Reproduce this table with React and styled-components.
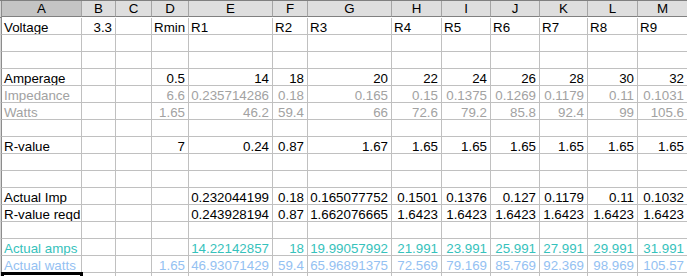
import styled, { createGlobalStyle } from 'styled-components'

const GlobalStyle = createGlobalStyle`
    html, body {
        margin: 0;
        padding: 0;
        background: #fff;
    }
    body {
        font-family: "Liberation Sans", Arial, sans-serif;
    }
`;

const COLS = [80, 34, 36, 37, 84, 35, 84, 50, 49, 49, 48, 50, 50];
const LETTERS = ['A', 'B', 'C', 'D', 'E', 'F', 'G', 'H', 'I', 'J', 'K', 'L', 'M'];

const Frame = styled.div`
    width: 687px;
    height: 276px;
    overflow: hidden;
    border-top: 1px solid #7f7f7f;
    box-sizing: border-box;
`;

const Sheet = styled.div`
    display: grid;
    grid-template-columns: 2px ${COLS.map(w => `${w}px`).join(' ')};
    grid-auto-rows: 17px;
    width: max-content;
    font-size: 13.33px;
`;

const Corner = styled.div`
    background: #d6d6d6;
    border-right: 1px solid #8c8c8c;
    border-bottom: 1px solid ${p => p.$head ? '#808080' : '#c8c8c8'};
    box-sizing: border-box;
`;

const HeaderCell = styled.div`
    background: ${p => p.$active ? '#c4c4c4' : '#dedede'};
    border-right: 1px solid #a4a4a4;
    border-bottom: 1px solid #808080;
    box-sizing: border-box;
    height: 16px;
    color: #000;
    text-align: center;
    line-height: 16px;
`;

const TONES = {
    normal: '#000',
    muted: '#a2a2a2',
    teal: '#36c2bc',
    sky: '#94c1f2',
};

const Cell = styled.div`
    border-right: 1px solid #c0c0c0;
    border-bottom: 1px solid #c0c0c0;
    box-sizing: border-box;
    padding: 2px 3px 0 2px;
    line-height: 15px;
    white-space: nowrap;
    overflow: hidden;
    text-align: ${p => p.$num ? 'right' : 'left'};
    color: ${p => TONES[p.$tone || 'normal']};
    ${p => p.$selected && `
        outline: 3px solid #000;
        outline-offset: -2px;
        position: relative;
        z-index: 1;
    `}
`;

const blank = [];

const rows = [
    { tone: 'normal', cells: ['Voltage', 3.3, '', 'Rmin', 'R1', 'R2', 'R3', 'R4', 'R5', 'R6', 'R7', 'R8', 'R9'] },
    { cells: blank },
    { cells: blank },
    { tone: 'normal', cells: ['Amperage', '', '', 0.5, 14, 18, 20, 22, 24, 26, 28, 30, 32] },
    { tone: 'muted', cells: ['Impedance', '', '', 6.6, 0.235714286, 0.18, 0.165, 0.15, 0.1375, 0.1269, 0.1179, 0.11, 0.1031] },
    { tone: 'muted', cells: ['Watts', '', '', 1.65, 46.2, 59.4, 66, 72.6, 79.2, 85.8, 92.4, 99, 105.6] },
    { cells: blank },
    { tone: 'normal', cells: ['R-value', '', '', 7, 0.24, 0.87, 1.67, 1.65, 1.65, 1.65, 1.65, 1.65, 1.65] },
    { cells: blank },
    { cells: blank },
    { tone: 'normal', cells: ['Actual Imp', '', '', '', 0.232044199, 0.18, 0.165077752, 0.1501, 0.1376, 0.127, 0.1179, 0.11, 0.1032] },
    { tone: 'normal', cells: ['R-value reqd', '', '', '', 0.243928194, 0.87, 1.662076665, 1.6423, 1.6423, 1.6423, 1.6423, 1.6423, 1.6423] },
    { cells: blank },
    { tone: 'teal', cells: ['Actual amps', '', '', '', 14.22142857, 18, 19.99057992, 21.991, 23.991, 25.991, 27.991, 29.991, 31.991] },
    { tone: 'sky', cells: ['Actual watts', '', '', 1.65, 46.93071429, 59.4, 65.96891375, 72.569, 79.169, 85.769, 92.369, 98.969, 105.57] },
    { cells: blank, selected: true },
];

export default function App() {
    return (
        <Frame>
            <GlobalStyle />
            <Sheet>
                <Corner $head />
                {LETTERS.map((l, i) => (
                    <HeaderCell key={l} $active={i === 0}>{l}</HeaderCell>
                ))}
                {rows.map((row, r) => [
                    <Corner key={`c${r}`} />,
                    ...LETTERS.map((l, c) => {
                        const v = row.cells[c];
                        const isNum = typeof v === 'number';
                        return (
                            <Cell
                                key={`${l}${r}`}
                                $num={isNum}
                                $tone={row.tone}
                                $selected={row.selected && c === 0}
                            >
                                {v === undefined ? '' : String(v)}
                            </Cell>
                        );
                    }),
                ])}
            </Sheet>
        </Frame>
    );
}
